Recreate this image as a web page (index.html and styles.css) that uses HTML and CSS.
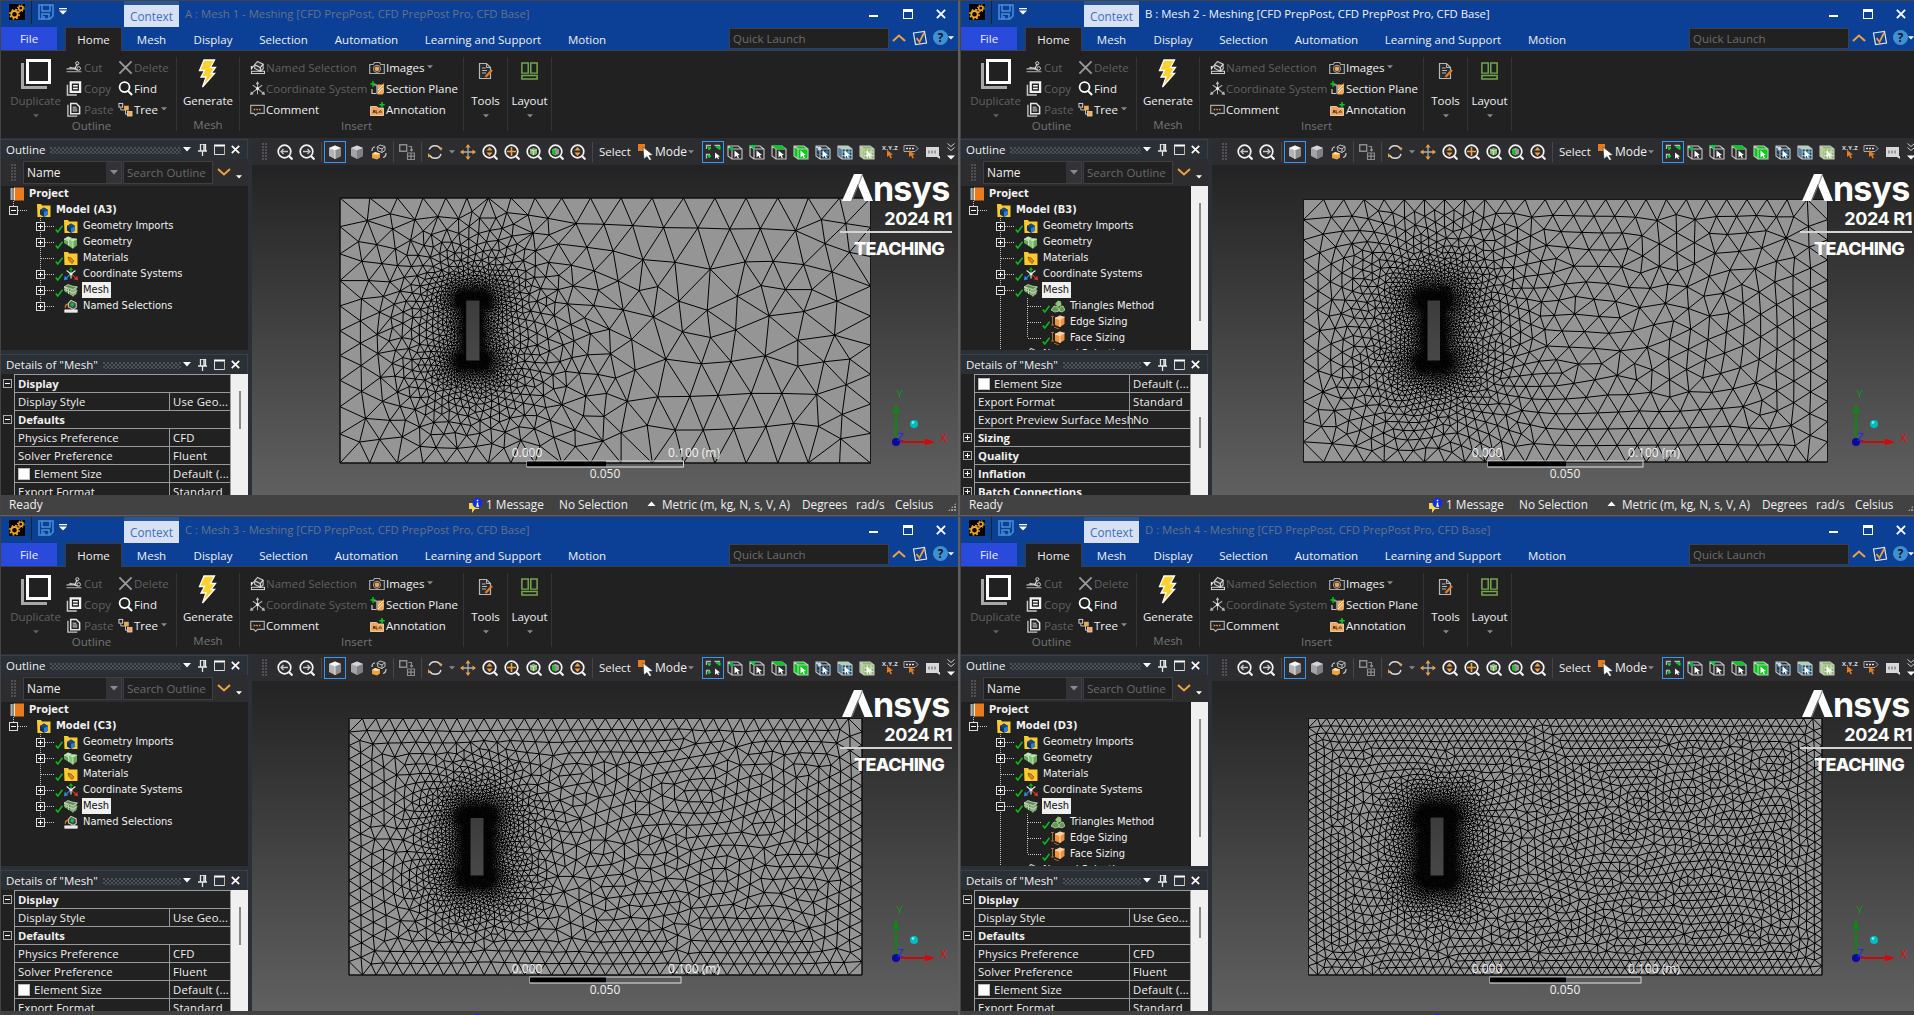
FILE: index.html
```html
<!DOCTYPE html>
<html lang="en">
<head>
<meta charset="utf-8">
<title>Meshing</title>
<link rel="stylesheet" href="styles.css">
</head>
<body>
<svg class="sprite" aria-hidden="true">
  <symbol id="gears" viewBox="0 0 16 16"><rect width="16" height="16" fill="#000"/><circle cx="5.5" cy="10.2" r="3.2" fill="none" stroke="#f5a81c" stroke-width="1.8"/><circle cx="5.5" cy="10.2" r="4.7" fill="none" stroke="#f5a81c" stroke-width="1.5" stroke-dasharray="1.8 1.9"/><circle cx="11.8" cy="4.2" r="2.1" fill="none" stroke="#f5a81c" stroke-width="1.4"/><circle cx="11.8" cy="4.2" r="3.3" fill="none" stroke="#f5a81c" stroke-width="1.2" stroke-dasharray="1.3 1.3"/></symbol>
  <symbol id="save" viewBox="0 0 16 16"><path d="M1 1h14v11l-3 3H1zM4 1v6h8V1M4 15v-5h7v5M6 12v3" fill="none" stroke="#4a8fd6" stroke-width="1.5"/></symbol>
  <symbol id="down" viewBox="0 0 8 5"><path d="M0 0h8L4 4.5z" fill="currentColor"/></symbol>
  <symbol id="qat" viewBox="0 0 8 7"><path d="M0 0h8v1.2H0zM0 2.4h8L4 6.6z" fill="#fff"/></symbol>
  <symbol id="chev-up" viewBox="0 0 14 8"><path d="M1 7l6-5.5L13 7" fill="none" stroke="#f0a040" stroke-width="2"/></symbol>
  <symbol id="chev-down" viewBox="0 0 14 8"><path d="M1 1l6 5.5L13 1" fill="none" stroke="#f0a040" stroke-width="2"/></symbol>
  <symbol id="tick-box" viewBox="0 0 16 16"><path d="M1.5 3l11-1.5 2 11.5-11 1.5z" fill="none" stroke="#e8e8e8" stroke-width="1.2"/><path d="M4.5 8l3 4 4.5-9" fill="none" stroke="#f0a040" stroke-width="1.7"/></symbol>
  <symbol id="duplicate" viewBox="0 0 30 30"><path d="M1.5 4v24.5H26" fill="none" stroke="#a8a8a8" stroke-width="3"/><rect x="6.5" y="1.500" width="22" height="22" fill="none" stroke="#fff" stroke-width="3"/></symbol>
  <symbol id="cut" viewBox="0 0 16 16"><path d="M0 9.500h9M3 8l7 1" stroke="#b8b8b8" stroke-width="1.400"/><path d="M9 9l2.500-5M8 9l4 2" stroke="#ddd" stroke-width="1.200"/><circle cx="11.500" cy="3.500" r="1.700" fill="none" stroke="#ddd"/><circle cx="13" cy="9" r="1.900" fill="none" stroke="#ddd"/><path d="M0 12.500h16" stroke="#b8b8b8"/></symbol>
  <symbol id="copy" viewBox="0 0 16 16"><path d="M1 4v11h10" fill="none" stroke="#c8c8c8" stroke-width="1.600"/><path d="M4.500 1.500h10v10h-10z" fill="none" stroke="#f4f4f4" stroke-width="2.400"/><path d="M7 5h5M7 8h5" stroke="#f4f4f4" stroke-width="1.500"/></symbol>
  <symbol id="paste" viewBox="0 0 16 16"><path d="M1.500 3v12h10" fill="none" stroke="#c8c8c8" stroke-width="1.400"/><path d="M4.500 1.500h6l3.500 3.500v7.500H4.500z" fill="none" stroke="#e8e8e8" stroke-width="1.600"/><path d="M6.500 5.500h4M6.500 7.500h5M6.500 9.500h5" stroke="#e8e8e8"/></symbol>
  <symbol id="delete" viewBox="0 0 16 16"><path d="M1.500 1.500l13 13M14.500 1.500l-13 13" stroke="#9a9a9a" stroke-width="2"/></symbol>
  <symbol id="find" viewBox="0 0 16 16"><circle cx="7" cy="6.500" r="5.300" fill="none" stroke="#fff" stroke-width="1.900"/><path d="M10.500 10.500l4.500 4.500" stroke="#fff" stroke-width="2.200"/></symbol>
  <symbol id="tree" viewBox="0 0 16 16"><rect x="1" y="1.500" width="4" height="4" fill="none" stroke="#ddd"/><path d="M3 6v2.500h4M8 8v5h3" fill="none" stroke="#ccc"/><rect x="6.500" y="4" width="5" height="5" fill="#f2a65a"/><rect x="10" y="10" width="5" height="5" fill="#f2a65a" stroke="#eee" stroke-width=".6"/></symbol>
  <symbol id="bolt" viewBox="0 0 20 30"><path d="M6 1h10.500l-4 7.500h5L13 14.500h3.500L4.500 28l3.500-10H3l3.500-6.500H1.500z" fill="#ffd22e" stroke="#fff" stroke-width="1.300"/></symbol>
  <symbol id="named" viewBox="0 0 16 16"><path d="M5 5l3-3.500 6 3v5l-3 2.500-6-3z" fill="#333" stroke="#c8c8c8" stroke-width="1.200"/><path d="M5 5l6 3v4M11 8l3-3.500M1 10l3-4M1.500 10.500v-4" fill="none" stroke="#e8e8e8" stroke-width="1.200"/><rect x="1.500" y="12" width="14" height="2.500" fill="none" stroke="#e0e0e0"/></symbol>
  <symbol id="named-color" viewBox="0 0 16 16"><path d="M5 5l3-3.500 6 3v5l-3 2.500-6-3z" fill="#444" stroke="#ccc" stroke-width="1.200"/><path d="M8.500 3.500l3.500 2-2 3.500-3-2z" fill="#12c326"/><path d="M1.500 10c0-3 1.500-4 3-4" fill="none" stroke="#c87830" stroke-width="1.500"/><rect x="1" y="12.500" width="14" height="2.500" fill="#ddd" stroke="#fff"/></symbol>
  <symbol id="coord-grey" viewBox="0 0 16 16"><path d="M8 8V2M8 8l6 5M8 8l-6 5M8 8l5-3.500M8 8L3 4.500M8 8v6" stroke="#b0b0b0" stroke-width="1.100"/><path d="M8 0l2 3.500H6zM0 15l1-4 3 3zM16 15l-1-4-3 3z" fill="#b8b8b8"/><circle cx="8" cy="8" r="1.600" fill="#eee"/></symbol>
  <symbol id="coord" viewBox="0 0 16 16"><path d="M8 8l5-4M8 8L3 4M8 8v5" stroke="#eee" stroke-width="1.200"/><path d="M8 8V3" stroke="#0c0" stroke-width="1.300"/><path d="M8 8l-5 4" stroke="#2a7be0" stroke-width="1.500"/><path d="M8 8l5 4" stroke="#e03020" stroke-width="1.500"/><path d="M8 0l2.500 3.500h-5z" fill="#0b0"/><path d="M0 15l.8-5 4 4z" fill="#3b8be8"/><path d="M16 15l-.8-5-4 4z" fill="#e03a28"/><circle cx="8" cy="8" r="1.700" fill="#eee"/></symbol>
  <symbol id="comment" viewBox="0 0 16 16"><path d="M.8 3.500h14.400v8.700H8l-2 2-2-2H.8z" fill="none" stroke="#aaa" stroke-width="1.300"/><path d="M4 8h8" stroke="#f0a040" stroke-width="1.600" stroke-dasharray="1.600 1.200"/></symbol>
  <symbol id="camera" viewBox="0 0 16 16"><path d="M.7 4.500h3.500L5.500 2.500h5l1.300 2h3.500v9H.7z" fill="none" stroke="#aaa" stroke-width="1.200"/><circle cx="8" cy="8.800" r="3.600" fill="none" stroke="#aaa"/><circle cx="8" cy="8.800" r="2.400" fill="#f6a24a"/></symbol>
  <symbol id="section" viewBox="0 0 16 16"><path d="M4 0v6M1.500 3h5" stroke="#0c2" stroke-width="1.400"/><path d="M3 8v4.500h4M8 4v9M5 4h3" fill="none" stroke="#ccc" stroke-width="1.200"/><path d="M8.500 3.500h5l1.500-1.500v10l-1.500 1.500h-5z" fill="#f2a65a"/><path d="M9 9l5-5M9 12l5-5" stroke="#fff" stroke-width=".8"/></symbol>
  <symbol id="annot" viewBox="0 0 16 16"><path d="M1.500 4.500h6l2 1.500h5v7.500h-13z" fill="#f2a65a" stroke="#ffe0c0" stroke-width=".8"/><path d="M4 11l1-3 1 3M7 8v3h1.500M10 11c0-3 3-3 2 0" stroke="#432" fill="none"/><path d="M13 0v5.500M10.300 2.700h5.400" stroke="#0c2" stroke-width="1.500"/></symbol>
  <symbol id="tools" viewBox="0 0 16 18"><path d="M2 1.500h7l4 4V16.500H2z" fill="#2a2a2a" stroke="#b8b8b8" stroke-width="1.200"/><path d="M9 1.500v4h4M4.500 6h3.500M4.500 8.500h5M4.500 11h4" fill="none" stroke="#b8b8b8"/><path d="M14.500 8l-6.500 7" stroke="#e07b28" stroke-width="2.400"/></symbol>
  <symbol id="layout" viewBox="0 0 16 17"><path d="M.8 1h6v9.500h-6zM9.200 1h6v9.500h-6zM.8 12.800h14.400v3.200H.8z" fill="none" stroke="#74a84c" stroke-width="1.400"/></symbol>
  <symbol id="pin" viewBox="0 0 9 12"><path d="M2.500 0h5v7h-5zM0 7h9M4.500 7v5" fill="none" stroke="#e8e8e8" stroke-width="1.300"/><path d="M6 0v7" stroke="#e8e8e8" stroke-width="1.500"/></symbol>
  <symbol id="max" viewBox="0 0 11 11"><path d="M.5 2.500v8h10v-8" fill="none" stroke="#c8b090"/><path d="M0 1.500h11" stroke="#fff" stroke-width="2"/><path d="M.5 1v9.500h10" fill="none" stroke="#ddd"/></symbol>
  <symbol id="x" viewBox="0 0 9 9"><path d="M.8.8l7.400 7.400M8.200.8L.8 8.200" stroke="#fff" stroke-width="1.700"/></symbol>
  <symbol id="book" viewBox="0 0 14 14"><path d="M1 1h4v12H1z" fill="#8b8b8b"/><path d="M0 2h2M0 4h2M0 6h2M0 8h2M0 10h2M0 12h2" stroke="#ddd" stroke-width=".8"/><path d="M5 .5h9v13H5z" fill="#e87b1e"/><path d="M4.500.5v13" stroke="#ffe0c0"/></symbol>
  <symbol id="folder" viewBox="0 0 14 14"><path d="M0 1h4l1 1.500h8.500V14H.5z" fill="#fbcb2c"/><path d="M3 7l4-2.500L11 7v4.500L7 14l-4-2.500z" fill="#10325e"/><path d="M7 9l4-2v4.500L7 14z" fill="#2a7fd4"/><path d="M3 7l4-2.500L11 7 7 9z" fill="#174a86"/></symbol>
  <symbol id="folder-mat" viewBox="0 0 14 14"><path d="M0 1h4l1 1.500h8.500V14H.5z" fill="#fbcb2c"/><path d="M4 6l3 1 3 3-2 2.500-3-3z" fill="#e0812a" stroke="#7a4a18" stroke-width=".7"/></symbol>
  <symbol id="geom" viewBox="0 0 14 14"><path d="M0 4l4-2.500 4 1.500 5 .5v7l-4 3-5-3-4-2.500z" fill="#6ba55a"/><path d="M0 4l4-2.500 4 1.500-3 2zM5 5l4-1.500 4.500.5L9 6.500z" fill="#c7e6b8"/><path d="M9 6.500v7L4.500 10.500V5z" fill="#8cc47a"/><path d="M9 6.500v7M4.500 5v5.500M0 4l4.500 2" stroke="#e4f4dc" stroke-width=".7" fill="none"/></symbol>
  <symbol id="mesh-i" viewBox="0 0 14 14"><path d="M0 4l4-2.500 4 1.500 5 .5v7l-4 3-5-3-4-2.500z" fill="#5f8a50"/><path d="M0 4l4-2.500 4 1.500 5.500 1L9 6.500 4.500 5zM0 4l4.500 2v5M4.500 8L0 6M9 6.500v7M9 10l4.500-2.500M4.500 8L9 10M7 6v6M11 5.500V12M2 5v4" stroke="#dcecd2" stroke-width=".7" fill="none"/></symbol>
  <symbol id="tri-i" viewBox="0 0 14 14"><path d="M4 5l3-3.500 3 1 .5 4L7 8z" fill="#8cc47a"/><path d="M0 11l3-4 4 1 1 4-4 1zM8 12l1-4 3-1 2 4-3 2z" fill="#5f9a50" stroke="#cfe8c4" stroke-width=".7"/></symbol>
  <symbol id="size-i" viewBox="0 0 14 14"><path d="M4 3l5-2.500 4.500 1.500v7L9 12l-5-2z" fill="#ee9440"/><path d="M4 3l5 1.500v7.500M9 4.500L13.500 2" stroke="#ffe6cc" fill="none" stroke-width=".9"/><path d="M4 3l5-2.500 4.500 1.500L9 4.500z" fill="#fbd0a4"/><path d="M1.500 1v9M0 1.500h3M0 10h3M3 12l5 2" stroke="#b06a2a" fill="none"/></symbol>
  <symbol id="check" viewBox="0 0 8 8"><path d="M.8 4.500l2 2.500L7.500.8" fill="none" stroke="#0cb81a" stroke-width="1.600"/></symbol>
  <symbol id="z-prev" viewBox="0 0 16 16"><circle cx="7.500" cy="7.500" r="6.300" fill="none" stroke="#f2f2f2" stroke-width="1.700"/><path d="M12 12l3.500 3.500" stroke="#f2f2f2" stroke-width="2.200"/><path d="M4 7.500h7M6.500 5L4 7.500 6.500 10" fill="none" stroke="#c4c4c4" stroke-width="1.300"/></symbol>
  <symbol id="z-next" viewBox="0 0 16 16"><circle cx="7.500" cy="7.500" r="6.300" fill="none" stroke="#f2f2f2" stroke-width="1.700"/><path d="M12 12l3.500 3.500" stroke="#f2f2f2" stroke-width="2.200"/><path d="M4 7.500h7M8.500 5L11 7.500 8.500 10" fill="none" stroke="#c4c4c4" stroke-width="1.300"/></symbol>
  <symbol id="z-box" viewBox="0 0 16 16"><circle cx="7.500" cy="7.500" r="6.300" fill="none" stroke="#f2f2f2" stroke-width="1.700"/><path d="M12 12l3.500 3.500" stroke="#f2f2f2" stroke-width="2.200"/><path d="M7.500 3l3 3.500h-6zM7.500 12l3-3.500h-6z" fill="#f0a040"/></symbol>
  <symbol id="z-fit" viewBox="0 0 16 16"><circle cx="7.500" cy="7.500" r="6.300" fill="none" stroke="#f2f2f2" stroke-width="1.700"/><path d="M12 12l3.500 3.500" stroke="#f2f2f2" stroke-width="2.200"/><path d="M7.500 3v9M3 7.500h9" stroke="#f0a040" stroke-width="1.600"/></symbol>
  <symbol id="z-cube" viewBox="0 0 16 16"><circle cx="7.500" cy="7.500" r="6.300" fill="none" stroke="#f2f2f2" stroke-width="1.700"/><path d="M12 12l3.500 3.500" stroke="#f2f2f2" stroke-width="2.200"/><path d="M4 5.500l3.500-1.700L11 5.500v4.200l-3.500 1.800L4 9.700z" fill="#86b870"/><path d="M4 5.500l3.500 1.500L11 5.500M7.500 7v4" stroke="#d8ecd0" stroke-width=".8" fill="none"/></symbol>
  <symbol id="z-cube2" viewBox="0 0 16 16"><circle cx="7.500" cy="7.500" r="6.300" fill="none" stroke="#f2f2f2" stroke-width="1.700"/><path d="M12 12l3.500 3.500" stroke="#f2f2f2" stroke-width="2.200"/><path d="M4 5.500l3.500-1.700L11 5.500v4.200l-3.500 1.800L4 9.700z" fill="#9a9a9a"/><path d="M7.500 6.500L4 5.500v4.200l3.500 1.800z" fill="#16c416"/></symbol>
  <symbol id="cube" viewBox="0 0 16 16"><path d="M2 4l6-2.500L14 4v8l-6 3-6-3z" fill="#b4b4b4"/><path d="M2 4l6-2.500L14 4 8 6.500z" fill="#f4f4f4"/><path d="M8 6.500L14 4v8l-6 3z" fill="#8f8f8f"/><path d="M8 6.500V15" stroke="#f4f4f4" stroke-width=".8"/></symbol>
  <symbol id="cube-flat" viewBox="0 0 16 16"><path d="M2 4l6-2.500L14 4v8l-6 3-6-3z" fill="#a4a4a4"/><path d="M2 4l6-2.500L14 4 8 6.500z" fill="#d4d4d4"/><path d="M8 6.500L14 4v8l-6 3z" fill="#808080"/></symbol>
  <symbol id="cube-ex" viewBox="0 0 16 16"><path d="M6 3l3-2 5 1.500v4l-3 2-4-1.500zM7 3.500l4 1.500v3.500M11 5l3-2.500" fill="none" stroke="#c0c0c0"/><path d="M1 10l3-2 5 1.500v4L6 15.500 1 14z" fill="#f0a040"/><path d="M1 10l3-2 5 1.500-3 1.500z" fill="#ffe0b8"/><path d="M1 7c0-3 1-4 3-4M15 9c0 3-1 4-3 4.500" fill="none" stroke="#ccc" stroke-width="1.200"/></symbol>
  <symbol id="dup-grid" viewBox="0 0 16 16"><path d="M.7.700h7v6.500h-7z" fill="none" stroke="#8c8c8c" stroke-width="1.400"/><path d="M9.500 2.500h3V7M11 5.500l1.500 1.500L14 5.500M8.500 9h7v6.500h-7zM12 9v6.500M8.500 12.200h7" fill="none" stroke="#8c8c8c" stroke-width="1.200"/></symbol>
  <symbol id="rotate" viewBox="0 0 16 16"><circle cx="8" cy="8" r="6.300" fill="none" stroke="#dcdcdc" stroke-width="1.500" stroke-dasharray="14 5.800" stroke-dashoffset="-2"/><path d="M12.500 3l3 1-1.500 3zM1 9l3 3-3 1.500z" fill="#f0a040"/></symbol>
  <symbol id="pan" viewBox="0 0 16 16"><path d="M8 3v10M3 8h10" stroke="#aaa" stroke-width="1.300"/><path d="M8 0l2.500 3.500h-5zM8 16l2.500-3.500h-5zM0 8l3.500-2.500v5zM16 8l-3.500-2.500v5z" fill="#f0a040"/></symbol>
  <symbol id="arrow" viewBox="0 0 8 12"><path d="M0 0l7.500 6.500-3.200.3 2 4-1.600.8-2-4L0 10z" fill="#fff"/></symbol>
  <symbol id="mode" viewBox="0 0 16 16"><path d="M0 0h7v7H0z" fill="#e87b1e"/><path d="M5 3l10 8-4 .5 2.500 4-2 1-2.500-4-3 2.500z" fill="#fff" stroke="#222" stroke-width=".5"/></symbol>
  <symbol id="sel-all" viewBox="0 0 16 16"><path d="M1.500 5V1.500H6M9.500 1.500h5V5M1.500 14.500v-4H5" fill="none" stroke="#bbb" stroke-width="1.300"/><path d="M3 3l3 1-2 2zM11 3l4-.5v3zM3 11l3 1-2 2z" fill="#0c3" stroke="#0c3"/><path d="M10 8.500l5 4-2 .3 1 2-1 .5-1-2-2 1.500z" fill="#fff"/></symbol>
  <symbol id="s-base" viewBox="0 0 16 16"><path d="M1 2l10 0 4 3v10H5L1 12zM5 5h10M5 5v10M1 2l4 3" fill="none" stroke="#c8c8c8" stroke-width="1.100"/></symbol>
  <symbol id="s-cur" viewBox="0 0 16 16"><path d="M7.500 6.500l5.500 4.500-2.300.3 1.200 2.400-1.200.6-1.200-2.500-2 1.700z" fill="#fff"/></symbol>
  <symbol id="help" viewBox="0 0 16 16"><circle cx="8" cy="8" r="7.500" fill="#3d8fd6"/></symbol>
  <symbol id="label-xyz" viewBox="0 0 16 16"><path d="M6 6l6 4.500-2.500.3 1.500 3-1.500.7-1.500-3L6 13z" fill="#e87b1e"/></symbol>
  <symbol id="tag" viewBox="0 0 16 16"><path d="M1 1.500h11l3 3-3 3H1z" fill="none" stroke="#aaa"/><path d="M3 4.500h9" stroke="#ddd" stroke-width="1.500" stroke-dasharray="2 1"/><path d="M6 6l6 4.500-2.500.3 1.500 3-1.500.7-1.500-3L6 13z" fill="#e87b1e"/></symbol>
  <symbol id="abc" viewBox="0 0 16 16"><path d="M1 3h13v9h1v3l-3-2H1z" fill="#d8d8d8"/><path d="M3 8h8" stroke="#999" stroke-width="3" stroke-dasharray="2 1"/></symbol>
  <symbol id="more" viewBox="0 0 8 17"><path d="M.5.500L4 3.500 7.500.5M.5 4.500L4 7.500l3.500-3" fill="none" stroke="#ccc"/><path d="M0 12.500h8L4 16.500z" fill="#fff"/></symbol>
  <symbol id="info" viewBox="0 0 17 16"><path d="M1 5h10v6H7l-3 4v-4H1z" fill="#f4d65a"/><circle cx="9.500" cy="5" r="5" fill="#1030e0"/><path d="M9.500 4.500v3.500M9.500 1.800v1.400M8.300 8h2.600" stroke="#fff" stroke-width="1.400"/></symbol>
</svg>

<main class="desktop" id="desktop"></main>

<template id="window-template">
<section class="window">
  <header class="titlebar">
    <svg class="app-icon"><use href="#gears"/></svg>
    <svg class="save-icon"><use href="#save"/></svg>
    <svg class="qat-icon"><use href="#qat"/></svg>
    <span class="context">Context</span>
    <span class="caption" data-slot="title"></span>
    <span class="win-buttons"><i class="min"></i><i class="maxi"></i><svg class="close"><use href="#x"/></svg></span>
  </header>
  <nav class="tabs">
    <span class="tab file">File</span>
    <span class="tab home">Home</span>
    <span class="tab w59">Mesh</span>
    <span class="tab w64">Display</span>
    <span class="tab w77">Selection</span>
    <span class="tab w89">Automation</span>
    <span class="tab w144">Learning and Support</span>
    <span class="tab w64">Motion</span>
    <span class="quick">Quick Launch</span>
    <svg class="chev"><use href="#chev-up"/></svg>
    <svg class="tickbox"><use href="#tick-box"/></svg>
    <span class="help">?</span>
    <svg class="dd white"><use href="#down"/></svg>
  </nav>

  <div class="ribbon">
    <div class="group g-outline">
      <div class="body">
        <div class="big off"><svg class="i30"><use href="#duplicate"/></svg><span>Duplicate</span><svg class="dd"><use href="#down"/></svg></div>
        <div class="stack s-a">
          <span class="cmd off"><svg><use href="#cut"/></svg>Cut</span>
          <span class="cmd off"><svg><use href="#copy"/></svg>Copy</span>
          <span class="cmd off"><svg><use href="#paste"/></svg>Paste</span>
        </div>
        <div class="stack">
          <span class="cmd off"><svg><use href="#delete"/></svg>Delete</span>
          <span class="cmd"><svg><use href="#find"/></svg>Find</span>
          <span class="cmd"><svg><use href="#tree"/></svg>Tree<svg class="dd"><use href="#down"/></svg></span>
        </div>
      </div>
      <div class="group-name">Outline</div>
    </div>
    <div class="group g-mesh">
      <div class="body"><div class="big"><svg class="bolt"><use href="#bolt"/></svg><span>Generate</span></div></div>
      <div class="group-name">Mesh</div>
    </div>
    <div class="group g-insert">
      <div class="body">
        <div class="stack s-b">
          <span class="cmd off"><svg><use href="#named"/></svg>Named Selection</span>
          <span class="cmd off"><svg><use href="#coord-grey"/></svg>Coordinate System</span>
          <span class="cmd"><svg><use href="#comment"/></svg>Comment</span>
        </div>
        <div class="stack s-c">
          <span class="cmd"><svg><use href="#camera"/></svg>Images<svg class="dd"><use href="#down"/></svg></span>
          <span class="cmd"><svg><use href="#section"/></svg>Section Plane</span>
          <span class="cmd"><svg><use href="#annot"/></svg>Annotation</span>
        </div>
      </div>
      <div class="group-name">Insert</div>
    </div>
    <div class="group g-small"><div class="body"><div class="big"><svg class="i18"><use href="#tools"/></svg><span>Tools</span><svg class="dd"><use href="#down"/></svg></div></div></div>
    <div class="group g-small"><div class="body"><div class="big"><svg class="i18"><use href="#layout"/></svg><span>Layout</span><svg class="dd"><use href="#down"/></svg></div></div></div>
  </div>

  <div class="work">
    <aside class="side">
      <div class="pane-head"><span>Outline</span><i class="dots"></i><svg class="dd white"><use href="#down"/></svg><svg class="pin"><use href="#pin"/></svg><svg class="max"><use href="#max"/></svg><svg class="x"><use href="#x"/></svg></div>
      <div class="filter">
        <i class="grip"></i>
        <span class="combo"><b>Name</b><em><svg class="dd"><use href="#down"/></svg></em></span>
        <span class="search">Search Outline</span>
        <svg class="chev"><use href="#chev-down"/></svg>
        <svg class="dd white tiny"><use href="#down"/></svg>
      </div>
      <div class="tree-pane">
        <div class="tree">
          <i class="trunk t1"></i><i class="trunk t2"></i><i class="trunk t3" data-only="expanded"></i>
          <div class="row l0"><svg class="ic"><use href="#book"/></svg><strong>Project</strong></div>
          <div class="row l1"><i class="box minus"></i><i class="link"></i><svg class="ic"><use href="#folder"/></svg><strong data-slot="model"></strong></div>
          <div class="row l2"><i class="box plus"></i><i class="link"></i><svg class="ck"><use href="#check"/></svg><svg class="ic"><use href="#folder"/></svg><span>Geometry Imports</span></div>
          <div class="row l2"><i class="box plus"></i><i class="link"></i><svg class="ck"><use href="#check"/></svg><svg class="ic"><use href="#geom"/></svg><span>Geometry</span></div>
          <div class="row l2 leaf"><i class="link"></i><svg class="ck"><use href="#check"/></svg><svg class="ic"><use href="#folder-mat"/></svg><span>Materials</span></div>
          <div class="row l2"><i class="box plus"></i><i class="link"></i><svg class="ck"><use href="#check"/></svg><svg class="ic"><use href="#coord"/></svg><span>Coordinate Systems</span></div>
          <div class="row l2"><i class="box" data-slot="mesh-box"></i><i class="link"></i><svg class="ck"><use href="#check"/></svg><svg class="ic"><use href="#mesh-i"/></svg><span class="selected">Mesh</span></div>
          <div class="row l3" data-only="expanded"><i class="link"></i><svg class="ck"><use href="#check"/></svg><svg class="ic"><use href="#tri-i"/></svg><span>Triangles Method</span></div>
          <div class="row l3" data-only="expanded"><i class="link"></i><svg class="ck"><use href="#check"/></svg><svg class="ic"><use href="#size-i"/></svg><span>Edge Sizing</span></div>
          <div class="row l3" data-only="expanded"><i class="link"></i><svg class="ck"><use href="#check"/></svg><svg class="ic"><use href="#size-i"/></svg><span>Face Sizing</span></div>
          <div class="row l2"><i class="box plus"></i><i class="link"></i><i class="ck"></i><svg class="ic"><use href="#named-color"/></svg><span>Named Selections</span></div>
        </div>
        <div class="scroll tree-scroll" data-only="expanded"><i></i></div>
      </div>
      <div class="pane-head details-head"><span>Details of "Mesh"</span><i class="dots"></i><svg class="dd white"><use href="#down"/></svg><svg class="pin"><use href="#pin"/></svg><svg class="max"><use href="#max"/></svg><svg class="x"><use href="#x"/></svg></div>
      <div class="details">
        <div class="props" data-only="top">
          <div class="prop head"><i class="box minus"></i><b>Display</b></div>
          <div class="prop"><span>Display Style</span><em>Use Geo...</em></div>
          <div class="prop head"><i class="box minus"></i><b>Defaults</b></div>
          <div class="prop"><span>Physics Preference</span><em>CFD</em></div>
          <div class="prop"><span>Solver Preference</span><em>Fluent</em></div>
          <div class="prop"><span><i class="cb"></i>Element Size</span><em>Default (...</em></div>
          <div class="prop"><span>Export Format</span><em>Standard</em></div>
        </div>
        <div class="props" data-only="scrolled">
          <div class="prop"><span><i class="cb"></i>Element Size</span><em>Default (...</em></div>
          <div class="prop"><span>Export Format</span><em>Standard</em></div>
          <div class="prop"><span>Export Preview Surface Mesh</span><em>No</em></div>
          <div class="prop head"><i class="box plus"></i><b>Sizing</b></div>
          <div class="prop head"><i class="box plus"></i><b>Quality</b></div>
          <div class="prop head"><i class="box plus"></i><b>Inflation</b></div>
          <div class="prop head"><i class="box plus"></i><b>Batch Connections</b></div>
        </div>
        <div class="scroll" data-slot="details-scroll"><i></i></div>
      </div>
    </aside>

    <div class="stage">
      <div class="gbar">
        <i class="grip"></i>
        <span class="tb"><svg><use href="#z-prev"/></svg></span>
        <span class="tb"><svg><use href="#z-next"/></svg></span>
        <i class="sep"></i>
        <span class="tb on"><svg><use href="#cube"/></svg></span>
        <span class="tb"><svg><use href="#cube-flat"/></svg></span>
        <span class="tb"><svg><use href="#cube-ex"/></svg></span>
        <i class="sep"></i>
        <span class="tb"><svg><use href="#dup-grid"/></svg></span>
        <i class="sep"></i>
        <span class="tb"><svg><use href="#rotate"/></svg></span>
        <span class="tb-dd"><svg class="dd"><use href="#down"/></svg></span>
        <span class="tb"><svg><use href="#pan"/></svg></span>
        <span class="tb"><svg><use href="#z-box"/></svg></span>
        <span class="tb"><svg><use href="#z-fit"/></svg></span>
        <span class="tb"><svg><use href="#z-cube"/></svg></span>
        <span class="tb"><svg><use href="#z-cube2"/></svg></span>
        <span class="tb"><svg><use href="#z-box"/></svg></span>
        <i class="sep"></i>
        <span class="select">Select</span>
        <svg class="mode-icon"><use href="#mode"/></svg>
        <span class="mode">Mode</span>
        <span class="tb-dd wide"><svg class="dd"><use href="#down"/></svg></span>
        <span class="tb on"><svg><use href="#sel-all"/></svg></span>
        <span class="tb"><svg viewBox="0 0 16 16"><use href="#s-base"/><circle cx="4.500" cy="4.500" r="2" fill="#0b4"/><use href="#s-cur"/></svg></span>
        <span class="tb"><svg viewBox="0 0 16 16"><use href="#s-base"/><path d="M0 1l6 0 0 5z" fill="#0c4"/><use href="#s-cur"/></svg></span>
        <span class="tb"><svg viewBox="0 0 16 16"><use href="#s-base"/><path d="M1 1.500h10l4 3.500H5z" fill="#0c2"/><use href="#s-cur"/></svg></span>
        <span class="tb"><svg viewBox="0 0 16 16"><path d="M1 2h10l4 3v10H5l-4-3z" fill="#0c1"/><use href="#s-base"/><use href="#s-cur"/></svg></span>
        <span class="tb"><svg viewBox="0 0 16 16"><use href="#s-base"/><path d="M5 8h10M5 11.500h10M8.500 5v10M12 5v10M1 5l4 3M1 9l4 3" stroke="#3f87c8"/><circle cx="4.500" cy="4.500" r="2" fill="#bde"/><use href="#s-cur"/></svg></span>
        <span class="tb"><svg viewBox="0 0 16 16"><path d="M1 2h10l4 3v10H5l-4-3z" fill="#1e4460"/><path d="M1 2h10l4 3H5z" fill="#a4d8a8"/><path d="M5 8h10M5 11.500h10M8.500 5v10M12 5v10M3 4v9" stroke="#7fc0e8"/><use href="#s-base"/><use href="#s-cur"/></svg></span>
        <span class="tb"><svg viewBox="0 0 16 16"><path d="M1 2h10l4 3v10H5l-4-3z" fill="#8aba60"/><path d="M5 8h10M5 11.500h10M8.500 5v10M12 5v10M3 4v9" stroke="#d8eec4"/><use href="#s-base"/><use href="#s-cur"/></svg></span>
        <span class="tb xyz"><b>X.Y.Z</b><svg><use href="#label-xyz"/></svg></span>
        <span class="tb"><svg><use href="#tag"/></svg></span>
        <span class="tb"><svg><use href="#abc"/></svg></span>
        <svg class="more"><use href="#more"/></svg>
      </div>
      <div class="viewport">
        <svg class="mesh" viewBox="252 164 706 331">
          <path class="mesh-face"/><path class="mesh-edges"/><path class="mesh-rim"/>
          <g class="ruler">
            <rect class="frame"/><rect class="ink"/><path class="under"/>
          </g>
          <g class="triad">
            <path d="M896 440V414" stroke="#0a8a12" stroke-width="2"/><path d="M896 402.500l3.500 10h-7z" fill="#0a8a12"/>
            <path d="M897 441h28" stroke="#c80a0a" stroke-width="2"/><path d="M935 441l-10-3.500v7z" fill="#d00a0a"/>
            <circle cx="896" cy="441" r="4" fill="#0a0a9c"/><circle cx="914" cy="423" r="4" fill="#0bb"/><circle cx="913" cy="421.500" r="1.300" fill="#7ff"/>
            <text x="899.500" y="396.500" fill="#0a9a14">Y</text><text x="943.500" y="441" fill="#f00">X</text><text x="900.500" y="439.500" fill="#22f">Z</text>
          </g>
          <g class="ruler-text"><text x="527" y="456">0.000</text><text x="694" y="456">0.100 (m)</text><text x="605" y="477">0.050</text></g>
        </svg>
        <div class="brand">
          <div class="logo"><svg viewBox="0 0 31 27"><path d="M0 27L12 0h8L9 27z" fill="#fff"/><path d="M15.500 10L20 0l11 27h-8.500z" fill="#fff"/><path d="M20.800 0L9.800 27" stroke="#7a7a7a" stroke-width=".9"/></svg><span>nsys</span></div>
          <div class="release">2024 R1</div>
          <div class="edition">TEACHING</div>
        </div>
      </div>
    </div>
  </div>

  <footer class="status">
    <span class="ready">Ready</span>
    <svg class="info"><use href="#info"/></svg><span class="st-msg">1 Message</span>
    <span class="st-sel">No Selection</span>
    <svg class="up"><use href="#down"/></svg><span class="st-unit">Metric (m, kg, N, s, V, A)</span>
    <span class="st-deg">Degrees</span><span class="st-rad">rad/s</span><span class="st-cel">Celsius</span>
    <i class="size-grip"></i>
  </footer>
</section>
</template>
<script src="app.js"></script>
</body>
</html>
```

FILE: styles.css
```css
* { box-sizing: border-box; }
body { margin: 0; background: #212121; overflow: hidden; font: 11.5px/1 "Open Sans", "Noto Sans", sans-serif; color: #f0f0f0; }
i, em { font-style: normal; }
svg { display: block; flex: none; }
.sprite { position: absolute; width: 0; height: 0; }
.desktop { display: grid; grid-template-columns: 960px 960px; grid-template-rows: 516px 516px; width: 1914px; height: 1015px; overflow: hidden; }
.window { display: flex; flex-direction: column; width: 960px; height: 516px; border: 1px solid #444; border-right: 2px solid #606060; border-bottom-color: #606060; background: #212121; overflow: hidden; white-space: nowrap; }
.dd { width: 6px; height: 4px; color: #8a8a8a; }
.white { color: #fff; }

.titlebar { display: flex; height: 26px; background: #0b4096; flex: none; }
.app-icon { width: 16px; height: 16px; margin: 3px 0 0 8px; }
.save-icon { width: 16px; height: 16px; margin: 3px 0 0 6px; box-sizing: content-box; padding-left: 6px; border-left: 1px solid #222; padding-bottom: 4px; margin-top: 0; padding-top: 3px; }
.qat-icon { width: 8px; height: 7px; margin: 7px 0 0 5px; }
.context { margin-left: 57px; width: 55px; height: 26px; border-top: 4px solid #2a5698; background: #d7e1f3; color: #3f6fc4; text-align: center; line-height: 23px; font-size: 11.8px; }
.caption { margin-left: 6px; line-height: 26px; color: #66718a; font-size: 11.3px; }
.active .caption { color: #f4f4f4; }
.win-buttons { margin-left: auto; display: flex; }
.win-buttons .min { width: 9px; height: 2px; background: #fff; margin: 14px 25px 0 0; }
.win-buttons .maxi { width: 10px; height: 10px; border: 1px solid #fff; border-top-width: 3px; margin: 8px 23px 0 0; }
.win-buttons .close { width: 10px; height: 10px; margin: 8px 12px 0 0; }

.tabs { display: flex; height: 24px; background: #0b4096; flex: none; border-bottom: 1px solid #3a3f48; }
.tab { text-align: center; line-height: 25px; flex: none; }
.file { width: 56px; background: #2a4adb; line-height: 23px; margin-right: 8px; }
.home { width: 57px; background: #212121; border: 1px solid #3c3c3c; border-bottom: 0; height: 24px; line-height: 24px; }
.w59 { width: 59px; } .w64 { width: 64px; } .w77 { width: 77px; } .w89 { width: 89px; } .w144 { width: 144px; }
.quick { margin: 1px 3px 0 110px; width: 160px; height: 21px; border: 1px solid #404040; background: #212121; color: #6e6e6e; line-height: 19px; padding-left: 3px; flex: none; }
.tabs .chev { width: 14px; height: 8px; margin: 7px 6px 0 0; }
.tickbox { width: 16px; height: 16px; margin: 3px 5px 0 0; }
.help { width: 15px; height: 15px; border-radius: 50%; background: #3f90d4; color: #111; font-weight: 700; text-align: center; line-height: 15px; margin-top: 3px; }
.tabs .dd { margin: 9px 0 0 0; }

.ribbon { display: flex; height: 87px; padding-top: 6px; flex: none; background: #212121; }
.group { height: 74px; display: flex; flex-direction: column; border-right: 1px solid #343434; flex: none; }
.group-name { color: #747474; text-align: center; height: 12px; line-height: 11px; }
.body { display: flex; height: 63px; }
.g-outline { width: 176px; } .g-mesh { width: 63px; } .g-insert { width: 224px; padding-left: 10px; } .g-small { width: 44px; }
.g-outline .group-name { padding-left: 6px; }
.big { display: flex; flex-direction: column; align-items: center; width: 100%; }
.g-outline .big { width: 69px; padding-right: 0; margin-right: -4px; }
.big span { margin-top: auto; height: 14px; line-height: 14px; }
.big .dd { margin: 6px 0 0; margin-bottom: 0; }
.off { color: #606060; }
.off .dd { color: #606060; }
.i30 { width: 30px; height: 30px; margin-top: 2px; }
.bolt { width: 20px; height: 30px; margin-top: 2px; }
.i18 { width: 17px; height: 18px; margin-top: 5px; }
.body .big span { margin: 0; position: static; }
.i30 + span, .bolt + span { margin-top: 5px !important; }
.i18 + span { margin-top: 14px !important; }
.stack { display: flex; flex-direction: column; width: 58px; }
.s-a { width: 52px; } .s-b { width: 119px; } .s-c { width: 90px; }
.cmd { display: flex; align-items: center; height: 21px; }
.cmd > svg:first-child { width: 15px; height: 15px; margin-right: 1px; }
.s-a .cmd > svg { width: 16px; margin-right: 2px; }
.s-c .cmd > svg:first-child { width: 16px; height: 16px; }
.cmd .dd { margin: -2px 0 0 3px; }

.work { display: flex; flex: 1; min-height: 0; }
.side { width: 251px; background: #2b2f36; display: flex; flex-direction: column; flex: none; padding-top: 1px; }
.pane-head { width: 247px; height: 20px; border: 1px solid #3a3f49; border-bottom: 0; border-left: 0; display: flex; align-items: center; padding: 0 7px 0 5px; flex: none; font-size: 11.5px; }
.dots { flex: 1; height: 7px; margin: 2px 2px 0 5px; background: radial-gradient(circle at 1px 1px, #4c5058 .8px, transparent 1px) 0 0/4px 4px, radial-gradient(circle at 3px 3px, #4c5058 .8px, transparent 1px) 0 0/4px 4px; }
.pane-head .dd { width: 8px; height: 5px; margin-right: 7px; }
.pin { width: 9px; height: 12px; margin-right: 7px; } .max { width: 11px; height: 11px; margin-right: 6px; } .pane-head .x { width: 9px; height: 9px; }
.filter { width: 247px; height: 27px; background: #2d2d30; display: flex; padding-top: 2px; flex: none; }
.grip { width: 5px; height: 18px; margin: 3px 0 0 10px; background: radial-gradient(circle at 1px 1px, #505055 .8px, transparent 1px) 0 0/3px 3px; flex: none; }
.combo { margin-left: 7px; width: 99px; height: 23px; border: 1px solid #3f3f42; background: #212121; display: flex; justify-content: space-between; line-height: 21px; padding-left: 3px; }
.combo b { font-weight: 400; font-size: 12px; }
.combo em { width: 15px; background: #333337; display: grid; place-items: center; }
.combo .dd { width: 8px; height: 5px; }
.search { margin-left: 1px; width: 90px; height: 23px; border: 1px solid #3f3f42; background: #212121; color: #6a6a6a; line-height: 21px; padding-left: 3px; font-size: 11.500px; }
.filter .chev { width: 14px; height: 8px; margin: 7px 5px 0 4px; }
.tiny { margin-top: 14px; }

.tree-pane { width: 247px; height: 164px; background: #212121; display: flex; overflow: hidden; flex: none; position: relative; font: 11px/16px "DejaVu Sans Condensed", "DejaVu Sans", sans-serif; }
.tree { flex: 1; position: relative; }
.row { display: flex; height: 16px; align-items: center; position: relative; }
.row strong { font-family: "DejaVu Sans Condensed", sans-serif; font-weight: 700; }
.row .ic { width: 14px; height: 14px; margin-right: 5px; }
.row .ck { width: 8px; height: 8px; margin: 5px 1px 0 0; flex: none; }
.l0 { padding-left: 9px; } .l1 { padding-left: 8px; } .l2 { padding-left: 35px; } .leaf { padding-left: 40px; } .l3 { padding-left: 67px; }
.link { height: 1px; width: 10px; background: repeating-linear-gradient(90deg, #c8c8c8 0 1px, transparent 1px 2px); margin-right: 0; flex: none; }
.l1 .link { margin-right: 9px; } .leaf .link { width: 14px; } .l3 .link { width: 14px; }
.trunk { position: absolute; width: 1px; background: repeating-linear-gradient(#c8c8c8 0 1px, transparent 1px 2px); }
.t1 { left: 12px; top: 15px; height: 5px; } .t2 { left: 39px; top: 32px; height: 88px; } .t3 { left: 66px; top: 112px; height: 40px; }
.expanded .t2 { height: 132px; }
.box { width: 9px; height: 9px; border: 1px solid #dcdcdc; flex: none; z-index: 1; background: linear-gradient(#fff, #fff) center/5px 1px no-repeat #212121; }
.plus { background: linear-gradient(#fff, #fff) center/5px 1px no-repeat, linear-gradient(#fff, #fff) center/1px 5px no-repeat #212121; }
.selected { background: #f0f0f0; color: #111; padding: 0 2px 0 1px; margin-left: -1px; }
.scroll { width: 17px; background: #f0f0f0; flex: none; }
.scroll i { display: block; width: 2px; height: 38px; margin: 17px 0 0 8px; background: #8a8a8a; }
.tree-scroll i { height: 118px; }
.thumb-short i { height: 31px; }
.thumb-low i { height: 31px; margin-top: 43px; }

.details-head { margin-top: 4px; }
.details { display: flex; width: 247px; flex: 1; min-height: 0; overflow: hidden; background: #212121; }
.props { width: 230px; padding-left: 13px; flex: none; }
.prop { height: 18px; display: flex; border: 1px solid #9a9a9a; border-width: 1px 1px 0 1px; line-height: 17px; font-size: 11.3px; position: relative; }
.prop span { width: 154px; padding-left: 3px; display: flex; align-items: center; flex: none; letter-spacing: .1px; }
.prop em { border-left: 1px solid #9a9a9a; padding-left: 3px; letter-spacing: .2px; }
.prop b { padding-left: 3px; letter-spacing: -.1px; }
.prop .box { position: absolute; left: -12px; top: 4px; border-color: #aaa; }
.cb { width: 12px; height: 12px; border: 1px solid #bbb; background: #fff; margin-right: 4px; }

.stage { flex: 1; display: flex; flex-direction: column; min-width: 0; }
.gbar { display: flex; height: 27px; background: #2d2d30; align-items: center; padding-bottom: 0; flex: none; }
.gbar .grip { margin: 0 7px 0 10px; }
.tb { width: 22px; height: 22px; display: grid; place-items: center; flex: none; }
.tb svg { width: 16px; height: 16px; }
.on { border: 1px solid #3399ff; }
.sep { width: 1px; height: 20px; background: #47474a; margin: 0 2px 0 3px; flex: none; }
.tb-dd { width: 11px; display: grid; place-items: center; flex: none; }
.wide { width: 16px; padding-right: 7px; }
.select { margin-left: 4px; width: 36px; flex: none; }
.mode-icon { width: 16px; height: 16px; margin: 0 1px 0 3px; }
.mode { width: 31px; flex: none; font-size: 12px; }
.xyz { position: relative; }
.xyz b { position: absolute; top: 4px; left: 4px; font-size: 6px; letter-spacing: .3px; color: #ddd; }
.more { width: 8px; height: 17px; margin-left: 3px; }

.viewport { flex: 1; position: relative; background: linear-gradient(#232323, #606060); min-height: 0; }
.mesh { width: 706px; height: 331px; }
.mesh-face { fill: #959595; fill-rule: evenodd; }
.mesh-edges { fill: none; stroke: #000; stroke-width: 1; }
.mesh-rim { fill: none; stroke: #161616; stroke-width: 1; }
.mesh text { font: 12px "Open Sans", "Noto Sans", sans-serif; text-anchor: middle; }
.ruler-text { fill: #f2f2f2; }
.triad text { font-size: 11px; }
.brand { position: absolute; right: 6px; top: 9px; width: 112px; color: #fff; font-family: Inter, "Open Sans", sans-serif; font-weight: 700; text-align: right; }
.logo { display: flex; height: 35px; }
.logo svg { width: 31px; height: 27px; margin-left: 2px; }
.logo span { font-size: 34px; line-height: 34px; letter-spacing: -.8px; margin-left: 0; margin-top: -2px; }
.release { font-size: 18px; line-height: 18px; letter-spacing: -.4px; height: 23px; border-bottom: 2px solid #d4d4d4; margin-top: 1px; }
.edition { font-size: 18px; line-height: 18px; letter-spacing: -.7px; margin-top: 7px; padding-right: 8px; font-weight: 800; }

.status { height: 20px; background: #424242; display: flex; align-items: center; flex: none; font-size: 11.8px; }
.ready { margin-left: 8px; width: 459px; }
.info { width: 17px; height: 16px; margin-right: 1px; margin-top: 1px; }
.st-msg { width: 73px; } .st-sel { width: 88px; }
.up { width: 9px; height: 5px; transform: rotate(180deg); margin: -4px 6px 0 0; color: #fff; }
.st-unit { width: 140px; } .st-deg { width: 54px; } .st-rad { width: 39px; } .st-cel { width: 53px; }
.size-grip { width: 8px; height: 8px; margin-top: 4px; background: radial-gradient(circle at 1px 1px, #999 .8px, transparent 1px) 0 0/3px 3px; clip-path: polygon(100% 0, 100% 100%, 0 100%); }
```

FILE: app.js
```js
// Face vertices of the coarsest mesh, in window coordinates scaled by (2.751, 3) from (320, 180).
const coarseTop = [56,138,214,284,347,405,464,526,592,666,745,829,915,1001,1087,1173,1260,1344,1430,1515];
const coarseLeft = [50,136,218,298,374,449,523,598,677,759,846];
const coarseRight = [50,138,226,315,404,492,580,669,757,846];
const coarseInner = [131,118,201,143,262,115,325,106,382,112,440,110,485,110,533,128,573,101,628,111,705,127,782,129,861,133,946,139,1040,140,1128,143,1212,142,1309,148,1380,115,1447,127,
107,181,157,190,208,203,250,177,307,160,350,145,657,188,735,198,807,209,889,235,977,243,1074,264,1170,242,1247,240,1331,250,1390,187,1409,272,1457,213,
587,155,543,188,593,209,630,243,692,252,755,269,821,299,879,328,930,316,988,360,1066,387,1149,345,1214,313,1281,325,1354,325,1423,360,1332,391,1236,404,1144,446,1075,469,998,452,918,408,835,386,754,373,697,314,656,325,
858,475,797,444,745,458,691,430,682,368,800,518,737,521,952,534,1050,548,1131,541,1225,524,1315,477,1416,462,1458,534,1387,542,1315,555,868,567,814,591,765,580,714,576,645,403,670,491,661,541,
1448,611,1367,640,1271,637,1187,637,1096,643,1018,646,930,647,846,661,789,637,732,645,666,671,679,616,782,706,702,747,634,718,829,755,901,733,978,747,1055,747,1139,743,1227,737,1303,727,1372,736,1437,700,1433,773,779,780,644,769,
116,240,171,247,214,253,193,302,135,298,115,353,175,346,165,393,112,419,158,460,112,486,196,409,200,440,160,517,200,547,114,553,167,589,115,631,173,661,126,712,193,718,165,775,110,783,227,768,232,590,214,633,236,717,276,796,320,800,378,802,430,796,474,788,553,778,275,738,314,724];

const windows = [
  { letter: "A", n: 1, model: "A3", gap: " : ", mesh: { box: [340, 197, 870.5, 462], hole: [465.7, 299, 480, 360], max: 31, grow: .165, side: 1, cap: 7, coarse: true }, ruler: [527, 606, 683.5] },
  { letter: "B", n: 2, model: "B3", gap: " : ", active: true, expanded: true, scrolled: true, mesh: { box: [343.5, 198.5, 867.5, 461], hole: [467, 299, 480.5, 360], max: 20.2, grow: .14, side: 2.5, cap: 8 }, ruler: [528, 606, 683] },
  { letter: "C", n: 3, model: "C3", gap: " : ", mesh: { box: [349, 201.5, 862, 458], hole: [470, 300.5, 484, 359], max: 13.6, grow: .15, side: 7, cap: 9 }, ruler: [530, 606, 681] },
  { letter: "D", n: 4, model: "D3", gap: " : ", expanded: true, thumb: "thumb-short", mesh: { box: [348.5, 201.5, 862, 458], hole: [470, 300, 484, 359], max: 9.1, grow: .15, side: 9.5, cap: 10.5 }, ruler: [530, 606, 681] }
];

function randomFrom(seed) {
  return () => {
    seed = (seed + 0x6D2B79F5) | 0;
    let t = Math.imul(seed ^ (seed >>> 15), 1 | seed);
    t = (t + Math.imul(t ^ (t >>> 7), 61 | t)) ^ t;
    return ((t ^ (t >>> 14)) >>> 0) / 4294967296;
  };
}

// Sweep-line Delaunay triangulation; returns flat index triples.
function delaunay(pts) {
  const n = pts.length;
  const p = pts.map(q => [q[0] + q[2], q[1] + q[3]]);
  const order = p.map((_, i) => i).sort((a, b) => p[a][0] - p[b][0]);
  p.push([-9000, -9000], [600, 20000], [10000, -9000]);
  const circle = (i, j, k) => {
    const [ax, ay] = p[i], [bx, by] = p[j], [cx, cy] = p[k];
    const bX = bx - ax, bY = by - ay, cX = cx - ax, cY = cy - ay;
    const d = 2 * (bX * cY - bY * cX) || 1e-12;
    const b2 = bX * bX + bY * bY, c2 = cX * cX + cY * cY;
    const ux = (cY * b2 - bY * c2) / d, uy = (bX * c2 - cX * b2) / d;
    return { i, j, k, x: ax + ux, y: ay + uy, r: ux * ux + uy * uy };
  };
  let open = [circle(n, n + 1, n + 2)];
  const closed = [];
  for (const c of order) {
    const [x, y] = p[c];
    const edges = new Map();
    const toggle = (a, b) => {
      const key = a < b ? a * 100000 + b : b * 100000 + a;
      if (edges.has(key)) edges.delete(key); else edges.set(key, [a, b]);
    };
    let w = 0;
    for (let t = 0; t < open.length; t++) {
      const o = open[t], dx = x - o.x, dy = y - o.y;
      if (dx > 0 && dx * dx > o.r) { closed.push(o); continue; }
      if (dx * dx + dy * dy - o.r > 1e-9) { open[w++] = o; continue; }
      toggle(o.i, o.j); toggle(o.j, o.k); toggle(o.k, o.i);
    }
    open.length = w;
    for (const [a, b] of edges.values()) open.push(circle(a, b, c));
  }
  return closed.concat(open).filter(t => t.i < n && t.j < n && t.k < n).map(t => [t.i, t.j, t.k]);
}

function buildMesh(m, seed) {
  const rnd = randomFrom(seed);
  const [x0, y0, x1, y1] = m.box, [hx0, hy0, hx1, hy1] = m.hole;
  const away = (x, y, ax, ay, bx, by) => Math.hypot(Math.max(ax - x, 0, x - bx), Math.max(ay - y, 0, y - by));
  const size = (x, y) => {
    const d = Math.min(away(x, y, hx0, hy0, hx1, hy1) - m.side,
      away(x, y, hx0 - 1, hy0, hx1 + 1, hy0) - m.cap, away(x, y, hx0 - 1, hy1, hx1 + 1, hy1) - m.cap);
    return Math.min(m.max, Math.max(1.4, 1.4 + m.grow * d));
  };
  const pts = [], cell = 6, grid = new Map();
  const key = (x, y) => Math.floor(x / cell) * 1000 + Math.floor(y / cell);
  const add = (x, y, fixed) => {
    pts.push([x, y, (rnd() - .5) * 1e-4, (rnd() - .5) * 1e-4, fixed]);
    const k = key(x, y);
    if (!grid.has(k)) grid.set(k, []);
    grid.get(k).push(pts.length - 1);
  };
  const near = (x, y, r) => {
    for (let cx = Math.floor((x - r) / cell); cx <= Math.floor((x + r) / cell); cx++)
      for (let cy = Math.floor((y - r) / cell); cy <= Math.floor((y + r) / cell); cy++)
        for (const i of grid.get(cx * 1000 + cy) || [])
          if (Math.hypot(pts[i][0] - x, pts[i][1] - y) < r) return true;
    return false;
  };
  const side = (ax, ay, bx, by, step) => {
    const n = Math.round(Math.hypot(bx - ax, by - ay) / step);
    for (let i = 0; i < n; i++) add(ax + (bx - ax) * i / n, ay + (by - ay) * i / n, true);
  };
  if (m.coarse) {
    const X = v => x0 + (v - 56) / 1459 * (x1 - x0), Y = v => y0 + (v - 50) / 796 * (y1 - y0);
    coarseTop.forEach(v => { add(X(v), y0, true); add(X(v), y1, true); });
    coarseLeft.slice(1, -1).forEach(v => add(x0, Y(v), true));
    coarseRight.slice(1, -1).forEach(v => add(x1, Y(v), true));
    for (let i = 0; i < coarseInner.length; i += 2) add(X(coarseInner[i]), Y(coarseInner[i + 1]), true);
  } else {
    side(x0, y0, x1, y0, m.max); side(x1, y0, x1, y1, m.max);
    side(x1, y1, x0, y1, m.max); side(x0, y1, x0, y0, m.max);
  }
  side(hx0, hy0, hx1, hy0, 1.4); side(hx1, hy0, hx1, hy1, 1.4);
  side(hx1, hy1, hx0, hy1, 1.4); side(hx0, hy1, hx0, hy0, 1.4);
  for (let i = 0; i < pts.length; i++) {
    const [px, py] = pts[i], h = size(px, py), turn = rnd() * 6.283;
    for (let k = 0; k < 18; k++) {
      const a = turn + k * 6.283 / 18;
      const x = px + Math.cos(a) * h * .93, y = py + Math.sin(a) * h * .93;
      const hs = size(x, y), rim = hs * .45;
      if (x < x0 + rim || x > x1 - rim || y < y0 + rim || y > y1 - rim) continue;
      if (away(x, y, hx0, hy0, hx1, hy1) < .5) continue;
      if (!near(x, y, hs * .84)) add(x, y, false);
    }
  }
  let tris;
  for (let pass = 0; pass < 7; pass++) {
    tris = delaunay(pts);
    if (pass === 6) break;
    const sum = pts.map(() => [0, 0, 0]);
    for (const t of tris) {
      const [a, b, c] = t.map(i => pts[i]);
      const cx = (a[0] + b[0] + c[0]) / 3, cy = (a[1] + b[1] + c[1]) / 3;
      const area = Math.abs((b[0] - a[0]) * (c[1] - a[1]) - (b[1] - a[1]) * (c[0] - a[0]));
      const w = area / size(cx, cy) ** 3;
      for (const i of t) { sum[i][0] += cx * w; sum[i][1] += cy * w; sum[i][2] += w; }
    }
    pts.forEach((p, i) => {
      if (p[4] || !sum[i][2]) return;
      const x = sum[i][0] / sum[i][2], y = sum[i][1] / sum[i][2];
      if (away(x, y, hx0, hy0, hx1, hy1) > .4) { p[0] = x; p[1] = y; }
    });
  }
  const seen = new Set();
  let d = "";
  for (const t of tris) {
    const cx = (pts[t[0]][0] + pts[t[1]][0] + pts[t[2]][0]) / 3, cy = (pts[t[0]][1] + pts[t[1]][1] + pts[t[2]][1]) / 3;
    if (cx > hx0 && cx < hx1 && cy > hy0 && cy < hy1) continue;
    for (let e = 0; e < 3; e++) {
      const a = Math.min(t[e], t[(e + 1) % 3]), b = Math.max(t[e], t[(e + 1) % 3]), k = a * 100000 + b;
      if (seen.has(k)) continue;
      seen.add(k);
      d += `M${pts[a][0].toFixed(1)} ${pts[a][1].toFixed(1)}L${pts[b][0].toFixed(1)} ${pts[b][1].toFixed(1)}`;
    }
  }
  return d;
}

const rect = ([a, b, c, d]) => `M${a} ${b}H${c}V${d}H${a}Z`;
const template = document.getElementById("window-template");

windows.forEach((w, index) => {
  const node = template.content.cloneNode(true);
  const $ = s => node.querySelector(s);
  const root = $(".window");
  root.classList.toggle("active", !!w.active);
  root.classList.toggle("expanded", !!w.expanded);
  $("[data-slot=title]").textContent = `${w.letter}${w.gap}Mesh ${w.n} - Meshing [CFD PrepPost, CFD PrepPost Pro, CFD Base]`;
  $("[data-slot=model]").textContent = `Model (${w.model})`;
  $("[data-slot=mesh-box]").classList.add(w.expanded ? "minus" : "plus");
  if (!w.expanded) node.querySelectorAll("[data-only=expanded]").forEach(e => e.remove());
  $(w.scrolled ? "[data-only=top]" : "[data-only=scrolled]").remove();
  if (w.scrolled) $("[data-slot=details-scroll]").classList.add("thumb-low");
  if (w.thumb) $("[data-slot=details-scroll]").classList.add(w.thumb);

  $(".mesh-face").setAttribute("d", rect(w.mesh.box) + rect(w.mesh.hole));
  $(".mesh-edges").setAttribute("d", buildMesh(w.mesh, 11 + index));
  $(".mesh-rim").setAttribute("d", rect(w.mesh.box));
  const [a, b, c] = w.ruler;
  const set = (s, o) => Object.entries(o).forEach(([k, v]) => $(s).setAttribute(k, v));
  set(".ruler .frame", { x: a, y: 460, width: c - a, height: 6, fill: "none", stroke: "#d8d8d8" });
  set(".ruler .ink", { x: a, y: 460.5, width: b - a, height: 5, fill: "#000" });
  set(".ruler .under", { d: `M${a} 466H${c}`, stroke: "#aaa" });
  document.getElementById("desktop").append(node);
});
```
